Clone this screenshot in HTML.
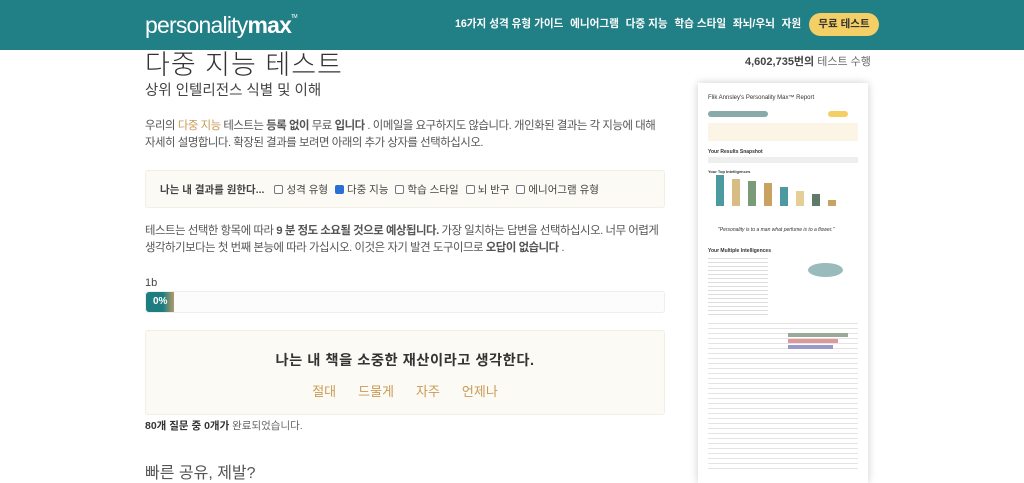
<!DOCTYPE html>
<html><head><meta charset="utf-8"><style>
*{margin:0;padding:0;box-sizing:border-box}
body{width:1024px;height:482px;overflow:hidden;background:#fff;font-family:"Liberation Sans","Noto Sans CJK KR",sans-serif;color:#444;position:relative}
.hdr{position:absolute;left:0;top:0;width:1024px;height:50px;background:#217f86}
.logo{position:absolute;left:145px;top:12px;color:#fff;font-size:23px;letter-spacing:-0.8px;font-weight:300}
.logo span{font-weight:bold}
.logo sup{font-size:5px;vertical-align:top;position:relative;top:2px}
.nav{position:absolute;top:16px;left:455px;color:#fff;font-size:10.6px;font-weight:bold;white-space:nowrap}
.nav a{margin-right:6.8px}
.btn{position:absolute;left:809px;top:13px;width:70px;height:23px;background:#f4cf65;border-radius:12px;color:#333;font-size:10.5px;font-weight:bold;text-align:center;line-height:23px}
h1{position:absolute;left:145px;top:43px;font-size:27px;font-weight:300;color:#333;letter-spacing:1px}
.sub{position:absolute;left:145px;top:79px;font-size:14.5px;color:#444}
.cnt{position:absolute;left:745px;top:53px;font-size:11px;color:#666}
.cnt b{color:#444}
p.t{position:absolute;left:145px;white-space:nowrap;font-size:11.4px;letter-spacing:-0.45px;line-height:17px;color:#555}
.or{color:#c99a55}
.box{position:absolute;left:145px;width:520px;background:#fcfaf4;border:1px solid #f3efe4;border-radius:3px}
.opts{top:170px;height:38px;font-size:10.5px;padding:11px 0 0 14px;color:#444}
.opts b{margin-right:6px}
.cb{display:inline-block;width:9px;height:9px;border:1px solid #777;border-radius:2px;margin:0 3px 0 4px;vertical-align:-1px;background:#fff}
.cb.on{background:#2a6fd6;border-color:#2a6fd6}
.lbl{position:absolute;left:145px;top:277px;font-size:11px;color:#444}
.bar{position:absolute;left:145px;top:291px;width:520px;height:22px;border:1px solid #eee;border-radius:3px;background:#fcfcfc}
.fill{position:absolute;left:0;top:0;width:28px;height:20px;background:linear-gradient(90deg,#1d7d80 60%,#b59a6a);border-radius:3px 0 0 3px;color:#fff;font-size:10px;font-weight:bold;line-height:20px;padding-left:7px}
.q{top:330px;height:85px;text-align:center}
.q .qt{margin-top:18px;font-size:14.3px;font-weight:bold;color:#333;letter-spacing:0.5px}
.q .ans{margin-top:11px;font-size:13px;color:#c99a55}
.q .ans span{margin:0 11px}
.done{position:absolute;left:145px;top:418px;font-size:10.5px;color:#666}
.done b{color:#333}
.share{position:absolute;left:145px;top:459px;font-size:16px;color:#555}
.rep{position:absolute;left:698px;top:83px;width:170px;height:400px;background:#fff;box-shadow:0 0 8px rgba(0,0,0,.2)}
.rep div{position:absolute}
</style></head><body>
<div class="hdr">
<div class="logo">personality<span>max</span><sup>TM</sup></div>
<div class="nav"><a>16가지 성격 유형 가이드</a><a>에니어그램</a><a>다중 지능</a><a>학습 스타일</a><a>좌뇌/우뇌</a><a>자원</a></div>
<div class="btn">무료 테스트</div>
</div>
<h1>다중 지능 테스트</h1>
<div class="sub">상위 인텔리전스 식별 및 이해</div>
<div class="cnt"><b>4,602,735번의</b> 테스트 수행</div>
<p class="t" style="top:118px">우리의 <span class="or">다중 지능</span> 테스트는 <b>등록 없이</b> 무료 <b>입니다</b> . 이메일을 요구하지도 않습니다. 개인화된 결과는 각 지능에 대해<br>자세히 설명합니다. 확장된 결과를 보려면 아래의 추가 상자를 선택하십시오.</p>
<div class="box opts"><b>나는 내 결과를 원한다...</b><span class="cb"></span>성격 유형 <span class="cb on"></span>다중 지능 <span class="cb"></span>학습 스타일 <span class="cb"></span>뇌 반구 <span class="cb"></span>에니어그램 유형</div>
<p class="t" style="top:223px">테스트는 선택한 항목에 따라 <b>9 분 정도 소요될 것으로 예상됩니다.</b> 가장 일치하는 답변을 선택하십시오. 너무 어렵게<br>생각하기보다는 첫 번째 본능에 따라 가십시오. 이것은 자기 발견 도구이므로 <b>오답이 없습니다</b> .</p>
<div class="lbl">1b</div>
<div class="bar"><div class="fill">0%</div></div>
<div class="box q"><div class="qt">나는 내 책을 소중한 재산이라고 생각한다.</div><div class="ans"><span>절대</span><span>드물게</span><span>자주</span><span>언제나</span></div></div>
<div class="done"><b>80개 질문 중 0개가</b> 완료되었습니다.</div>
<div class="share">빠른 공유, 제발?</div>
<div class="rep">
<div style="left:10px;top:12px;font-size:6px;color:#333">Flik Annsley's Personality Max™ Report</div>
<div style="left:10px;top:28px;width:60px;height:6px;background:#8aa;border-radius:3px"></div>
<div style="left:130px;top:28px;width:20px;height:6px;background:#f4cf65;border-radius:3px"></div>
<div style="left:10px;top:40px;width:150px;height:18px;background:#fcf5e6"></div>
<div style="left:10px;top:66px;font-size:5px;font-weight:bold;color:#333">Your Results Snapshot</div>
<div style="left:10px;top:74px;width:150px;height:6px;background:#eee"></div>
<div style="left:10px;top:86px;font-size:4px;font-weight:bold;color:#333">Your Top Intelligences</div>
<div style="left:18px;top:92px;width:8px;height:31px;background:#4a9aa0"></div>
<div style="left:34px;top:96px;width:8px;height:27px;background:#d7bd84"></div>
<div style="left:50px;top:98px;width:8px;height:25px;background:#7a9a7a"></div>
<div style="left:66px;top:100px;width:8px;height:23px;background:#c9a262"></div>
<div style="left:82px;top:104px;width:8px;height:19px;background:#4a9aa0"></div>
<div style="left:98px;top:108px;width:8px;height:15px;background:#e5cf95"></div>
<div style="left:114px;top:111px;width:8px;height:12px;background:#5d7a6a"></div>
<div style="left:130px;top:117px;width:8px;height:6px;background:#c9a262"></div>
<div style="left:20px;top:144px;font-size:5px;font-style:italic;color:#333">"Personality is to a man what perfume is to a flower."</div>
<div style="left:10px;top:165px;font-size:5px;font-weight:bold;color:#333">Your Multiple Intelligences</div>
<div style="left:10px;top:175px;width:60px;height:60px;background:repeating-linear-gradient(#ddd 0 1px,#fff 1px 4px)"></div>
<div style="left:110px;top:180px;width:35px;height:14px;border-radius:50%;background:#9bb"></div>
<div style="left:10px;top:240px;width:150px;height:150px;background:repeating-linear-gradient(#e4e4e4 0 1px,#fff 1px 5px)"></div>
<div style="left:90px;top:250px;width:60px;height:4px;background:#9a9"></div>
<div style="left:90px;top:256px;width:50px;height:4px;background:#d99"></div>
<div style="left:90px;top:262px;width:45px;height:4px;background:#99c"></div>
</div>
</body></html>
